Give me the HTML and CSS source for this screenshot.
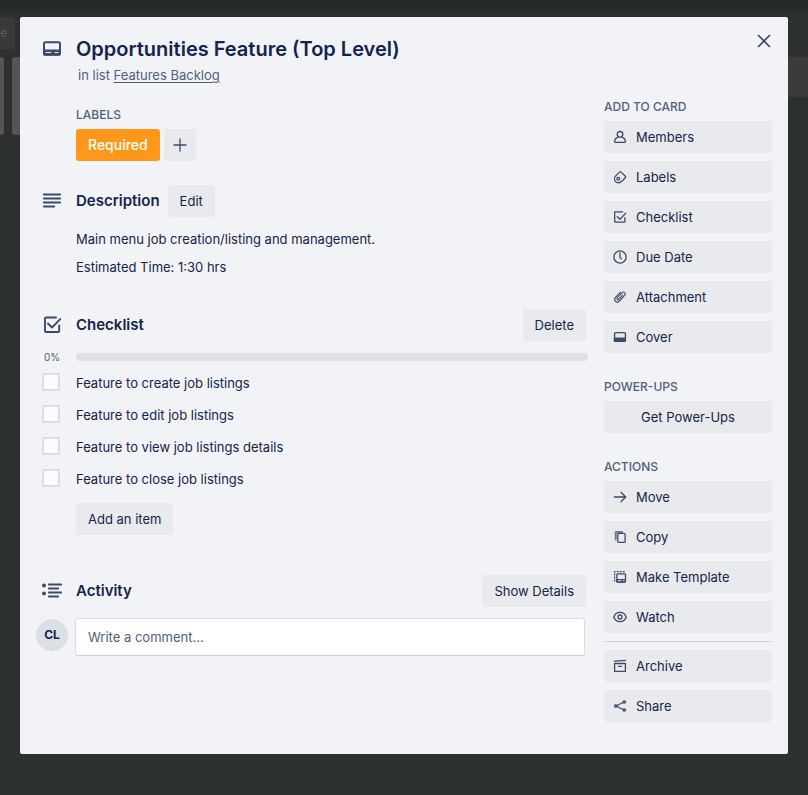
FILE: index.html
```html
<!DOCTYPE html>
<html lang="en">
<head>
<meta charset="utf-8">
<meta name="viewport" content="width=device-width, initial-scale=1">
<title>Opportunities Feature (Top Level)</title>
<link rel="stylesheet" href="styles.css">
</head>
<body>
<div class="board">
  <div class="board-top"></div>
  <div class="board-bar"><span class="board-chip">e</span></div>
  <div class="lists">
    <div class="list list-edge"></div>
    <div class="list list-wide"></div>
    <div class="list list-add"></div>
  </div>
</div>
<div class="overlay">
  <div class="dialog" role="dialog" aria-labelledby="card-title">
    <button class="close" type="button" aria-label="Close"><svg class="icon-lg" viewBox="0 0 24 24"><path d="M6.5 6.5l11 11M17.5 6.5l-11 11"/></svg></button>
    <header class="card-header">
      <svg class="icon-lg" viewBox="0 0 24 24"><rect x="4" y="5.2" width="16" height="12.6" rx="1.3" stroke-width="2"/><path class="solid" d="M4 13h16v5H4z"/><path class="light" d="M6 15.5h5M15 15.5h3"/></svg>
      <div>
        <h1 id="card-title">Opportunities Feature (Top Level)</h1>
        <p class="in-list">in list <a href="#">Features Backlog</a></p>
      </div>
    </header>
    <div class="columns">
      <main class="main">
        <section class="labels">
          <h2 class="caption">LABELS</h2>
          <div class="label-row">
            <button class="label" type="button">Required</button>
            <button class="add-label" type="button" aria-label="Add label"><svg class="icon" viewBox="0 0 16 16"><path d="M8 2v12M2 8h12"/></svg></button>
          </div>
        </section>
        <section class="description">
          <div class="section-head">
            <svg class="icon-lg" viewBox="0 0 24 24"><path d="M3.8 5.5h16.4M3.8 9.5h16.4M3.8 13.5h16.4M3.8 17.5h10.4" stroke-width="1.8"/></svg>
            <h2>Description</h2>
            <button class="btn" type="button">Edit</button>
          </div>
          <p>Main menu job creation/listing and management.</p>
          <p>Estimated Time: 1:30 hrs</p>
        </section>
        <section class="checklist">
          <div class="section-head">
            <svg class="icon-lg" viewBox="0 0 24 24"><path d="M16 4.500H6a1 1 0 0 0-1 1V18a1 1 0 0 0 1 1h12.200a1 1 0 0 0 1-1v-5.500M8 10.500l4 4 8.200-8.400" stroke-width="1.9"/></svg>
            <h2>Checklist</h2>
            <button class="btn push" type="button">Delete</button>
          </div>
          <div class="progress"><span id="pct">0%</span><div class="track" role="progressbar" aria-labelledby="pct" aria-valuenow="0"></div></div>
          <ul class="items">
            <li><input type="checkbox" id="item1"><label for="item1">Feature to create job listings</label></li>
            <li><input type="checkbox" id="item2"><label for="item2">Feature to edit job listings</label></li>
            <li><input type="checkbox" id="item3"><label for="item3">Feature to view job listings details</label></li>
            <li><input type="checkbox" id="item4"><label for="item4">Feature to close job listings</label></li>
          </ul>
          <button class="btn add-item" type="button">Add an item</button>
        </section>
        <section class="activity">
          <div class="section-head">
            <svg class="icon-lg" viewBox="0 0 24 24"><path d="M8.800 5.500h12.400M8.800 9.500h9.400M8.800 13.500h12.400M8.800 17.500h9.400" stroke-width="1.8"/><circle class="dot" cx="4" cy="6.500" r="2"/><circle class="dot" cx="4" cy="14.500" r="2"/></svg>
            <h2>Activity</h2>
            <button class="btn push" type="button">Show Details</button>
          </div>
          <div class="comment">
            <span class="avatar">CL</span>
            <input type="text" placeholder="Write a comment..." aria-label="Write a comment">
          </div>
        </section>
      </main>
      <aside class="side">
        <section class="group">
          <h2 class="caption">ADD TO CARD</h2>
          <button class="btn" type="button"><svg class="icon" viewBox="0 0 16 16"><circle cx="8" cy="5.300" r="2.800"/><path d="M5.800 8.300C3.800 9 2.600 10.700 2.600 12.400c0 .7.300 1 1 1h8.800c.7 0 1-.3 1-1 0-1.700-1.200-3.400-3.200-4.100"/></svg>Members</button>
          <button class="btn" type="button"><svg class="icon" viewBox="0 0 16 16"><path d="M7.500 3.100a1.100 1.100 0 0 1 1.600 0l4.200 4.100a1.100 1.100 0 0 1 0 1.600l-3.700 3.700c-1.800 1.700-4.600 1.600-6 .1-1.400-1.500-1.400-4.100.1-5.700z"/><circle cx="6.300" cy="9.700" r="1.400"/></svg>Labels</button>
          <button class="btn" type="button"><svg class="icon" viewBox="0 0 16 16"><path d="M10.500 2.900H3.300a.6.600 0 0 0-.6.600v9a.6.600 0 0 0 .6.600h9a.6.600 0 0 0 .6-.6V8.700M5.300 7.800l2.600 2.600 5.800-6.100"/></svg>Checklist</button>
          <button class="btn" type="button"><svg class="icon" viewBox="0 0 16 16"><circle cx="8" cy="8" r="6.100"/><path d="M7.900 4v4.300l1.500 1.600"/></svg>Due Date</button>
          <button class="btn" type="button"><svg class="icon thin" viewBox="0 0 16 16"><path d="M10.700 6.200l-3.900 4c-1 1-2.500-.4-1.500-1.500l4.700-4.900c1.900-1.900 4.500.6 2.700 2.600l-5.400 5.600c-2.700 2.700-6.300-.8-3.800-3.600l5-5.200"/></svg>Attachment</button>
          <button class="btn" type="button"><svg class="icon" viewBox="0 0 16 16"><rect x="2.600" y="3.700" width="10.800" height="8.700" rx="1"/><path class="solid" d="M2.600 9h10.800v3.400H2.600z"/></svg>Cover</button>
        </section>
        <section class="group">
          <h2 class="caption">POWER-UPS</h2>
          <button class="btn centered" type="button">Get Power-Ups</button>
        </section>
        <section class="group">
          <h2 class="caption">ACTIONS</h2>
          <button class="btn" type="button"><svg class="icon" viewBox="0 0 16 16"><path d="M2.300 8h11M9 3.300L13.700 8 9 12.700"/></svg>Move</button>
          <button class="btn" type="button"><svg class="icon" viewBox="0 0 16 16"><path class="fade" d="M10 2.900H4.300a.6.600 0 0 0-.6.600V10.500"/><rect x="5.800" y="4.400" width="7.300" height="9" rx="1"/></svg>Copy</button>
          <button class="btn" type="button"><svg class="icon" viewBox="0 0 16 16"><rect x="4.900" y="4.900" width="8.600" height="8.200" rx=".8"/><path class="solid" d="M4.900 10.500h8.600v2.500H4.900z"/><path class="light" d="M6.300 11.700h2.500M11.200 11.700h1"/><path class="dashed" d="M2.600 12.500V2.600h10.400"/></svg>Make Template</button>
          <button class="btn" type="button"><svg class="icon" viewBox="0 0 16 16"><path d="M1.700 8C2.800 5 5 3.300 8 3.300S13.200 5 14.300 8C13.200 11 11 12.700 8 12.700S2.800 11 1.700 8z"/><circle cx="8" cy="8" r="2"/></svg>Watch</button>
          <hr>
          <button class="btn" type="button"><svg class="icon" viewBox="0 0 16 16"><path d="M2.500 3.200l11-.8M2.600 5.500h10.800v7.900H2.600zM6.700 8.400h2.600"/></svg>Archive</button>
          <button class="btn" type="button"><svg class="icon" viewBox="0 0 16 16"><path d="M12.300 4L3.700 8l8.600 4"/><circle class="node" cx="3.700" cy="8" r="1.400"/><circle class="node" cx="12.300" cy="4" r="1.400"/><circle class="node" cx="12.300" cy="12" r="1.400"/></svg>Share</button>
        </section>
      </aside>
    </div>
  </div>
</div>
</body>
</html>
```
FILE: styles.css
```css
* { box-sizing: border-box; }
body {
  margin: 0;
  min-height: 100vh;
  background: #2c3031;
  color: #14244b;
  font: 13px/20px Inter, Roboto, "Liberation Sans", sans-serif;
}
h1, h2, p, ul { margin: 0; padding: 0; }
ul { list-style: none; }
button, input { font: inherit; color: inherit; margin: 0; }
button { border: 0; cursor: pointer; }

.board { overflow: hidden; }
.board-top { height: 9px; background: #25292a; }
.board-bar { padding: 8px 0; }
.board-chip {
  display: block;
  width: 15px;
  padding: 6px 0;
  background: #38393b;
  color: #5c5e60;
  font-size: 12px;
  border-radius: 0 3px 3px 0;
}
.lists { display: flex; align-items: flex-start; gap: 8px; }
.list { height: 78px; background: #555356; border-radius: 3px; }
.list-edge { width: 4px; border-radius: 0 3px 3px 0; }
.list-wide { flex: 1; }
.list-add { width: 60px; height: 40px; background: #3b3b3d; border-radius: 0; }

.overlay { position: absolute; inset: 0; padding: 17px 20px 41px; }
.dialog {
  position: relative;
  max-width: 768px;
  margin: 0 auto;
  padding: 20px 16px 32px;
  background: #f1f3f7;
  border-radius: 2px;
}

svg { display: block; flex: none; fill: none; stroke: #3d4a6b; stroke-linecap: round; stroke-linejoin: round; }
.icon { width: 16px; height: 16px; stroke-width: 1.3; }
.icon-lg { width: 24px; height: 24px; stroke-width: 1.7; }
.thin { stroke-width: 1.1; }
.solid, .dot, .node { fill: #3d4a6b; }
.dot { stroke: none; }
.solid { stroke-width: 1; }
.node { fill: #77809a; stroke-width: 1; }
.light { stroke: #e8eaed; stroke-width: 1; }
.fade { stroke: #707b94; stroke-width: 2; }
.dashed { stroke-dasharray: 2 1; stroke-linecap: butt; }

.close {
  position: absolute;
  top: 8px;
  right: 8px;
  padding: 4px;
  background: none;
}
.card-header { display: flex; gap: 12px; padding-left: 4px; }
.card-header h1 { font-size: 20px; line-height: 24px; font-weight: 600; }
.in-list { margin-top: 4px; padding-left: 2px; color: #505f7c; }
.in-list a { color: inherit; text-underline-offset: 2px; }

.columns { display: flex; gap: 16px; margin-top: 12px; }
.main { flex: 1; min-width: 0; padding-top: 8px; }
.side { width: 168px; flex: none; }

.caption { font-size: 12px; line-height: 20px; font-weight: 500; color: #505f7c; }
.labels { padding-left: 40px; }
.label-row { display: flex; gap: 4px; margin-top: 4px; }
.label {
  height: 32px;
  padding: 0 12px;
  border-radius: 3px;
  background: #ff981a;
  color: #fff;
  font-size: 14px;
  font-weight: 500;
}
.add-label { padding: 8px; border-radius: 3px; background: #e8eaed; }

.btn {
  height: 32px;
  padding: 0 12px;
  border-radius: 3px;
  background: #e8eaed;
  white-space: nowrap;
}
.push { margin-left: auto; }
.section-head { display: flex; align-items: center; padding: 0 2px 0 4px; }
.section-head h2 { margin: 0 8px 0 12px; font-size: 15px; line-height: 20px; font-weight: 600; }

.description { margin-top: 24px; }
.description p { padding-left: 40px; margin-top: 8px; }
.description .section-head { margin-bottom: 12px; }

.checklist { margin-top: 32px; }
.progress { display: flex; align-items: center; height: 8px; margin-top: 12px; }
.progress span { width: 40px; padding-left: 8px; font-size: 10px; color: #505f7c; }
.track { flex: 1; height: 8px; border-radius: 4px; background: #dfe1e6; }
.items { margin-top: 6px; }
.items li { display: flex; align-items: flex-start; height: 32px; padding: 6px 0 0 6px; gap: 16px; }
.items input {
  appearance: none;
  width: 18px;
  height: 18px;
  border: 2px solid #dcdee3;
  border-radius: 2px;
  background: #fafbfd;
}
.add-item { margin: 8px 0 0 40px; }

.activity { margin-top: 40px; }
.comment { display: flex; gap: 7px; margin-top: 11px; padding-right: 3px; }
.avatar {
  width: 32px;
  height: 32px;
  margin-top: 1px;
  border-radius: 50%;
  background: #dcdfe4;
  font-size: 12px;
  line-height: 32px;
  font-weight: 700;
  text-align: center;
}
.comment input {
  flex: 1;
  min-width: 0;
  height: 38px;
  padding: 0 12px;
  border: 1px solid #d9dce3;
  border-bottom-color: #cbcfd9;
  border-radius: 3px;
  background: #fff;
}
.comment input::placeholder { color: #505f7c; opacity: 1; }

.group { display: flex; flex-direction: column; gap: 8px; }
.group + .group { margin-top: 24px; }
.group .caption { margin-bottom: -4px; }
.side .btn { display: flex; align-items: center; gap: 8px; padding: 0 8px; }
.side .centered { justify-content: center; }
hr { width: 100%; height: 1px; margin: 0; border: 0; background: #d3d6dd; }
```
